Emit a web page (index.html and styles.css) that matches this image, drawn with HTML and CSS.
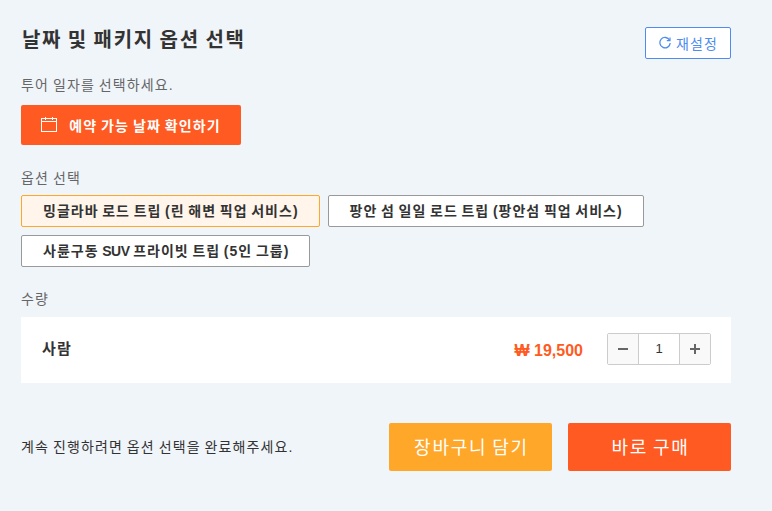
FILE: index.html
```html
<!DOCTYPE html>
<html lang="ko">
  <head>
    <meta charset="UTF-8" />
    <title>날짜 및 패키지 옵션 선택</title>
    <link rel="stylesheet" href="styles.css" />
  </head>
  <body>
    <div class="container">
      <div class="header">
        <h2>날짜 및 패키지 옵션 선택</h2>
        <button class="reset-btn">
          <svg width="14" height="14" viewBox="0 0 14 14" fill="none" stroke="#4e8cf0" stroke-width="1.3">
            <path d="M11.6 4.2A5.2 5.2 0 1 0 12.2 7" />
            <path d="M12 1.4V4.6H8.8" stroke-width="1.2" />
          </svg>
          재설정
        </button>
      </div>

      <div class="label date-label">투어 일자를 선택하세요.</div>
      <button class="date-btn">
        <svg width="16" height="16" viewBox="0 0 16 16" fill="none" stroke="#fff" stroke-width="1">
          <rect x="0.5" y="1.5" width="15" height="13" />
          <path d="M0.5 4.5H15.5" />
          <path d="M4.5 0V3M11.5 0V3" />
        </svg>
        예약 가능 날짜 확인하기
      </button>

      <div class="label option-label">옵션 선택</div>
      <div class="options">
        <button class="option selected">밍글라바 로드 트립 (린 해변 픽업 서비스)</button>
        <button class="option">팡안 섬 일일 로드 트립 (팡안섬 픽업 서비스)</button>
        <button class="option">사륜구동 <span class="latin">SUV</span> 프라이빗 트립 (5인 그룹)</button>
      </div>

      <div class="label qty-label">수량</div>
      <div class="qty-card">
        <div class="qty-name">사람</div>
        <div class="price">₩ 19,500</div>
        <div class="stepper">
          <button class="step-btn">
            <svg width="12" height="12" viewBox="0 0 12 12"><path d="M1 6H11" stroke="#666" stroke-width="2" /></svg>
          </button>
          <div class="step-value">1</div>
          <button class="step-btn">
            <svg width="12" height="12" viewBox="0 0 12 12"><path d="M1 6H11M6 1V11" stroke="#666" stroke-width="2" /></svg>
          </button>
        </div>
      </div>

      <div class="footer">
        <div class="notice">계속 진행하려면 옵션 선택을 완료해주세요.</div>
        <button class="buy-btn cart">장바구니 담기</button>
        <button class="buy-btn now">바로 구매</button>
      </div>
    </div>
  </body>
</html>
```

FILE: styles.css
```css
html,
body {
  background-color: #f0f5fa;
  margin: 0;
}

body {
  color: #333;
  font-family: "Liberation Sans", "Noto Sans CJK KR", sans-serif;
  font-size: 14px;
  letter-spacing: 0.08em;
  word-spacing: -0.08em;
}

button {
  cursor: pointer;
  font-family: inherit;
  letter-spacing: inherit;
  word-spacing: inherit;
}

.latin {
  letter-spacing: -0.5px;
}

.container {
  padding: 27px 41px 40px 21px;
}

.header {
  align-items: flex-start;
  display: flex;
  justify-content: space-between;
}

h2 {
  font-size: 20px;
  font-weight: 700;
  letter-spacing: 1.7px;
  line-height: 24px;
  margin: 0;
  padding: 1px 0 0 1px;
  word-spacing: -1.6px;
}

.reset-btn {
  align-items: center;
  background-color: #fff;
  border: 1px solid #4e8cf0;
  border-radius: 2px;
  color: #4e8cf0;
  display: flex;
  font-size: 14px;
  gap: 4px;
  height: 32px;
  justify-content: center;
  padding: 0;
  width: 86px;
}

.label {
  color: #666;
  font-size: 14px;
  line-height: 20px;
}

.date-label {
  margin-top: 16px;
  margin-bottom: 10px;
}

.date-btn {
  align-items: center;
  background-color: #ff5a21;
  border: 0;
  border-radius: 2px;
  color: #fff;
  display: flex;
  font-size: 14px;
  font-weight: 700;
  gap: 12px;
  height: 40px;
  justify-content: center;
  padding: 0;
  width: 220px;
}

.option-label {
  margin-top: 23px;
  margin-bottom: 7px;
}

.options {
  display: flex;
  flex-wrap: wrap;
  gap: 8px;
}

.option {
  background-color: #fff;
  border: 1px solid #999;
  border-radius: 2px;
  color: #333;
  font-size: 14px;
  font-weight: 700;
  height: 32px;
  letter-spacing: 1px;
  padding: 0 20px 2px 21px;
  word-spacing: -1.2px;
}

.option.selected {
  background-color: #fff5ea;
  border-color: #ffa729;
}

.qty-label {
  margin-top: 22px;
  margin-bottom: 8px;
}

.qty-card {
  align-items: center;
  background-color: #fff;
  display: flex;
  height: 66px;
  padding: 0 20px 0 21px;
}

.qty-name {
  flex: 1;
  font-size: 15px;
  font-weight: 700;
  margin-bottom: 6px;
}

.price {
  color: #ff5a21;
  font-size: 16px;
  font-weight: 700;
  letter-spacing: 0;
  margin-right: 24px;
  margin-top: 1px;
  word-spacing: 0;
}

.stepper {
  background-color: #fff;
  border: 1px solid #ccc;
  border-radius: 2px;
  display: flex;
  height: 30px;
  margin-bottom: 2px;
}

.step-btn {
  align-items: center;
  background-color: #f9f9f9;
  border: 0;
  display: flex;
  justify-content: center;
  padding: 0;
  width: 30px;
}

.step-value {
  border-left: 1px solid #ccc;
  border-right: 1px solid #ccc;
  font-size: 13px;
  letter-spacing: 0;
  line-height: 30px;
  text-align: center;
  width: 40px;
}

.footer {
  align-items: center;
  display: flex;
  gap: 16px;
  margin-top: 40px;
}

.notice {
  flex: 1;
  font-size: 14px;
  margin-bottom: 2px;
}

.buy-btn {
  border: 0;
  border-radius: 2px;
  color: #fff;
  font-size: 18px;
  height: 48px;
  letter-spacing: 1.8px;
  padding: 0 0 3px 2px;
  width: 163px;
  word-spacing: -2px;
}

.cart {
  background-color: #ffa729;
}

.now {
  background-color: #ff5a21;
}
```
